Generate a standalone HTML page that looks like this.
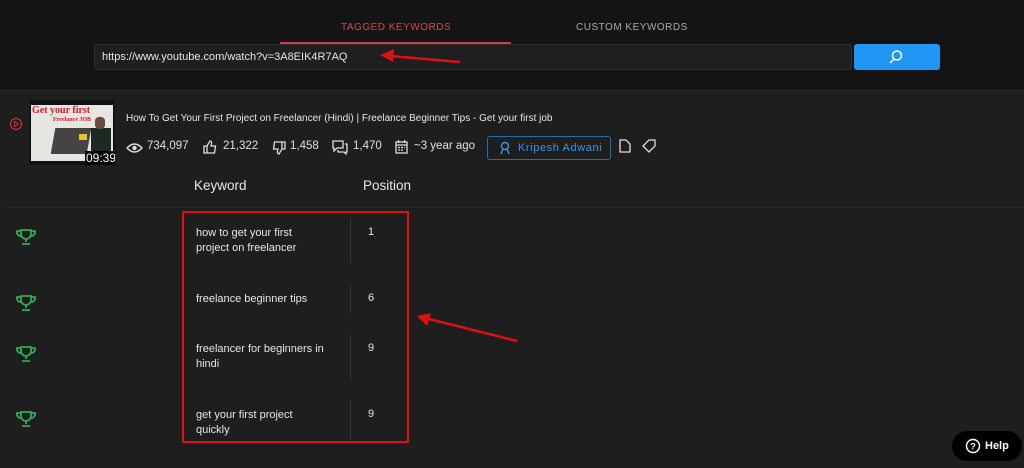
<!DOCTYPE html>
<html><head><meta charset="utf-8"><style>
*{margin:0;padding:0;box-sizing:border-box}
body{width:1024px;height:468px;background:#1e1e1e;font-family:"Liberation Sans",sans-serif;position:relative;overflow:hidden;color:#ddd}
.top{position:absolute;left:0;top:0;width:1024px;height:90px;background:#141414}
.abs{position:absolute}
.t{font-size:13px;white-space:nowrap}
.s{position:absolute;top:140px;font-size:11.5px;color:#e0e0e0;white-space:nowrap}
.k{position:absolute;left:196px;font-size:11px;line-height:15px;color:#e6e6e6}
.p{position:absolute;left:368px;font-size:11px;color:#e6e6e6}
</style></head><body>
<div class="top"></div>
<div class="abs t" style="left:341px;top:22px;font-size:10px;color:#d24a4a;letter-spacing:.5px">TAGGED KEYWORDS</div>
<div class="abs t" style="left:576px;top:22px;font-size:10px;color:#aaa;letter-spacing:.5px">CUSTOM KEYWORDS</div>
<div class="abs" style="left:280px;top:42px;width:231px;height:2px;background:#c84444"></div>
<div class="abs" style="left:94px;top:44px;width:758px;height:26px;background:#1f1f1f;border:1px solid #2e2e2e;border-radius:3px"></div>
<div class="abs t" style="left:102px;top:51px;font-size:11px;color:#e6e6e6">https://www.youtube.com/watch?v=3A8EIK4R7AQ</div>
<svg class="abs" style="left:380px;top:48px" width="85" height="18"><line x1="80" y1="14" x2="10" y2="8" stroke="#e01010" stroke-width="2.5"/><polygon points="0,7 14,1 13,14" fill="#e01010"/></svg>
<div class="abs" style="left:854px;top:44px;width:86px;height:26px;background:#2196f3;border-radius:3px"></div>
<svg class="abs" style="left:888px;top:49px" width="16" height="16"><circle cx="9" cy="6.5" r="4.5" fill="none" stroke="#fff" stroke-width="1.5"/><line x1="6" y1="10" x2="2" y2="14" stroke="#fff" stroke-width="1.5"/></svg>
<div class="abs" style="left:0;top:90px;width:1024px;height:1px;background:#2a2a2a"></div>
<svg class="abs" style="left:9px;top:117px" width="14" height="14"><circle cx="7" cy="7" r="5.5" fill="none" stroke="#d03030" stroke-width="1.2"/><polygon points="5.5,4.5 9.5,7 5.5,9.5" fill="none" stroke="#d03030"/></svg>
<div class="abs" style="left:29px;top:100px;width:86px;height:65px;background:#111;overflow:hidden">
<div class="abs" style="left:2px;top:5px;width:82px;height:56px;background:#e8e6e2"></div>
<div class="abs" style="left:24px;top:28px;width:36px;height:26px;background:#444;transform:skewX(-10deg)"></div>
<div class="abs" style="left:62px;top:28px;width:20px;height:26px;background:#1c2a22"></div>
<div class="abs" style="left:66px;top:17px;width:10px;height:12px;background:#6b4a3a;border-radius:4px"></div>
<div class="abs" style="left:50px;top:34px;width:8px;height:6px;background:#f0c020"></div>
<div class="abs t" style="left:3px;top:5px;font-family:'Liberation Serif',serif;font-size:10px;font-weight:bold;color:#d02020">Get your first</div>
<div class="abs t" style="left:24px;top:17px;font-family:'Liberation Serif',serif;font-size:6px;font-weight:bold;color:#d02020">Freelance JOB</div>
<div class="abs t" style="left:56px;top:51px;font-size:12px;color:#fff;background:#000;padding:0 1px">09:39</div>
</div>
<div class="abs t" style="left:126px;top:113px;font-size:10px;color:#e6e6e6">How To Get Your First Project on Freelancer (Hindi) | Freelance Beginner Tips - Get your first job</div>
<svg class="abs" style="left:126px;top:142px" width="17" height="12"><path d="M1 6Q8.5-2 16 6Q8.5 14 1 6z" fill="none" stroke="#ddd" stroke-width="1.4"/><circle cx="8.5" cy="6" r="2.2" fill="#ddd"/></svg>
<div class="s" style="left:147px">734,097</div>
<svg class="abs" style="left:203px;top:140px" width="14" height="14"><path d="M1 6h3v7H1zM4 6l3-5q2 0 1.5 3L8 6h4.5l-1 7H4" fill="none" stroke="#ddd" stroke-width="1.3"/></svg>
<div class="s" style="left:223px">21,322</div>
<svg class="abs" style="left:272px;top:141px" width="14" height="14"><path d="M13 8h-3V1h3zM10 8l-3 5q-2 0-1.5-3L6 8H1.5l1-7H10" fill="none" stroke="#ddd" stroke-width="1.3"/></svg>
<div class="s" style="left:290px">1,458</div>
<svg class="abs" style="left:332px;top:140px" width="16" height="15"><path d="M1 1h10v7H5l-3 3V8H1zM13 4h2v8h-1v2l-2-2H6v-2" fill="none" stroke="#ddd" stroke-width="1.3"/></svg>
<div class="s" style="left:353px">1,470</div>
<svg class="abs" style="left:395px;top:140px" width="13" height="14"><rect x="1" y="2" width="11" height="11" fill="none" stroke="#ddd" stroke-width="1.3"/><path d="M3.5 0v3M9.5 0v3M1 5h11M3 7.5h2M6 7.5h2M9 7.5h1M3 10h2M6 10h2" stroke="#ddd" stroke-width="1.2"/></svg>
<div class="s" style="left:414px">~3 year ago</div>
<div class="abs" style="left:487px;top:136px;width:124px;height:24px;border:1px solid #1f6fb8;border-radius:3px"></div>
<svg class="abs" style="left:499px;top:141px" width="12" height="14"><circle cx="6" cy="5" r="3.5" fill="none" stroke="#3a95e8" stroke-width="1.4"/><path d="M2 13l2-5M10 13l-2-5" stroke="#3a95e8" stroke-width="1.4"/></svg>
<div class="abs t" style="left:518px;top:142px;font-size:11px;color:#3a95e8;letter-spacing:.6px">Kripesh Adwani</div>
<svg class="abs" style="left:619px;top:139px" width="12" height="14"><path d="M1 1h6l4 4v8H1z" fill="none" stroke="#ddd" stroke-width="1.3"/></svg>
<svg class="abs" style="left:642px;top:139px" width="14" height="14"><path d="M7 1h6v6l-6 6-6-6z" fill="none" stroke="#ddd" stroke-width="1.3"/></svg>
<div class="abs t" style="left:194px;top:178px;font-size:13.5px;color:#e6e6e6">Keyword</div>
<div class="abs t" style="left:363px;top:178px;font-size:13.5px;color:#e6e6e6">Position</div>
<div class="abs" style="left:5px;top:207px;width:1019px;height:1px;background:#2c2c2c"></div>

<div class="abs" style="left:182px;top:211px;width:227px;height:232px;border:2px solid #e01010"></div>
<div class="abs" style="left:350px;top:218px;width:1px;height:45px;background:#333"></div>
<div class="abs" style="left:350px;top:283px;width:1px;height:30px;background:#333"></div>
<div class="abs" style="left:350px;top:335px;width:1px;height:45px;background:#333"></div>
<div class="abs" style="left:350px;top:400px;width:1px;height:40px;background:#333"></div>

<div class="k" style="top:226px">how to get your first<br>project on freelancer</div>
<div class="p" style="top:226px">1</div>
<div class="k" style="top:292px">freelance beginner tips</div>
<div class="p" style="top:292px">6</div>
<div class="k" style="top:342px">freelancer for beginners in<br>hindi</div>
<div class="p" style="top:342px">9</div>
<div class="k" style="top:408px">get your first project<br>quickly</div>
<div class="p" style="top:408px">9</div>

<svg class="abs" style="left:15px;top:228px" width="22" height="18"><g fill="none" stroke="#2eaa55" stroke-width="1.8"><path d="M6 2h10v4a5 5 0 0 1-10 0z"/><path d="M6 3H2a4 4 0 0 0 4 5M16 3h4a4 4 0 0 1-4 5"/><path d="M11 11v3M7 16h8"/></g></svg>
<svg class="abs" style="left:15px;top:294px" width="22" height="18"><g fill="none" stroke="#2eaa55" stroke-width="1.8"><path d="M6 2h10v4a5 5 0 0 1-10 0z"/><path d="M6 3H2a4 4 0 0 0 4 5M16 3h4a4 4 0 0 1-4 5"/><path d="M11 11v3M7 16h8"/></g></svg>
<svg class="abs" style="left:15px;top:345px" width="22" height="18"><g fill="none" stroke="#2eaa55" stroke-width="1.8"><path d="M6 2h10v4a5 5 0 0 1-10 0z"/><path d="M6 3H2a4 4 0 0 0 4 5M16 3h4a4 4 0 0 1-4 5"/><path d="M11 11v3M7 16h8"/></g></svg>
<svg class="abs" style="left:15px;top:410px" width="22" height="18"><g fill="none" stroke="#2eaa55" stroke-width="1.8"><path d="M6 2h10v4a5 5 0 0 1-10 0z"/><path d="M6 3H2a4 4 0 0 0 4 5M16 3h4a4 4 0 0 1-4 5"/><path d="M11 11v3M7 16h8"/></g></svg>

<svg class="abs" style="left:415px;top:312px" width="105" height="32"><line x1="102" y1="29" x2="14" y2="7" stroke="#e01010" stroke-width="2.5"/><polygon points="2,4 16,1 12,14" fill="#e01010"/></svg>

<div class="abs" style="left:952px;top:431px;width:70px;height:30px;background:#000;border-radius:15px"></div>
<svg class="abs" style="left:965px;top:438px" width="16" height="16"><circle cx="8" cy="8" r="6.5" fill="none" stroke="#fff" stroke-width="1.5"/><text x="8" y="11.5" font-size="9" font-weight="bold" fill="#fff" text-anchor="middle" font-family="Liberation Sans">?</text></svg>
<div class="abs t" style="left:985px;top:440px;font-size:11px;font-weight:bold;color:#fff">Help</div>
</body></html>
